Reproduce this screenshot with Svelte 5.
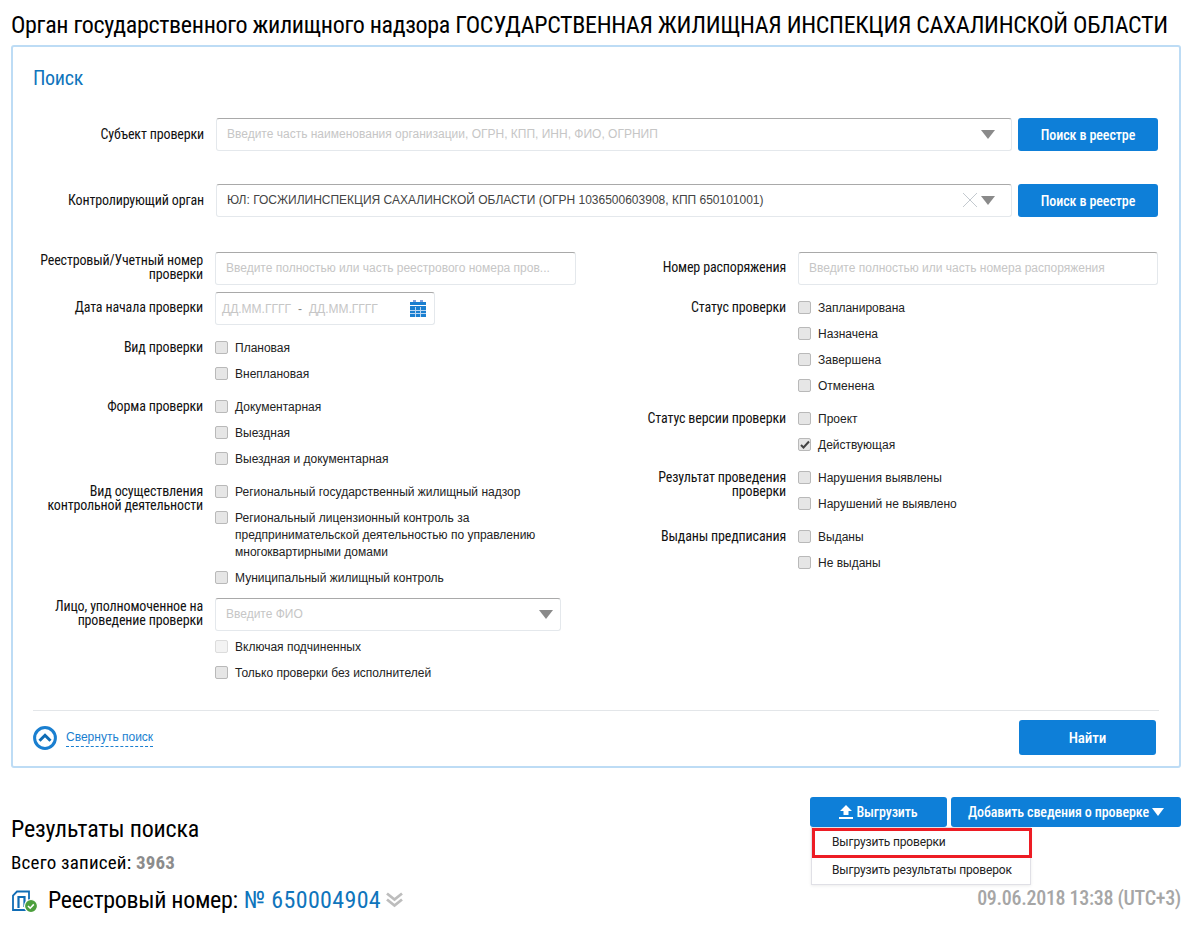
<script>
  const leftGroups = [
    { label: 'Вид проверки', items: [{ text: 'Плановая' }, { text: 'Внеплановая' }] },
    { label: 'Форма проверки', items: [{ text: 'Документарная' }, { text: 'Выездная' }, { text: 'Выездная и документарная' }] },
    {
      label: 'Вид осуществления контрольной деятельности',
      items: [
        { text: 'Региональный государственный жилищный надзор' },
        { text: 'Региональный лицензионный контроль за предпринимательской деятельностью по управлению многоквартирными домами' },
        { text: 'Муниципальный жилищный контроль' },
      ],
    },
  ];

  const rightGroups = [
    { label: 'Статус проверки', items: [{ text: 'Запланирована' }, { text: 'Назначена' }, { text: 'Завершена' }, { text: 'Отменена' }] },
    { label: 'Статус версии проверки', items: [{ text: 'Проект' }, { text: 'Действующая', checked: true }] },
    { label: 'Результат проведения проверки', items: [{ text: 'Нарушения выявлены' }, { text: 'Нарушений не выявлено' }] },
    { label: 'Выданы предписания', items: [{ text: 'Выданы' }, { text: 'Не выданы' }] },
  ];
</script>

{#snippet arrow()}
  <svg class="arrow" width="14" height="9" viewBox="0 0 14 9"><path d="M0 0h14L7 9z" fill="#8a8a8a" /></svg>
{/snippet}

{#snippet check(item)}
  <div class="check">
    <span class="box" class:disabled={item.disabled}>
      {#if item.checked}
        <svg width="10" height="9" viewBox="0 0 10 9"><path d="M1 5l2.500 2.500L9 1.500" fill="none" stroke="#444" stroke-width="2" /></svg>
      {/if}
    </span>
    <span class="check-text">{item.text}</span>
  </div>
{/snippet}

{#snippet group(g)}
  <div class="row group">
    <div class="label">{g.label}</div>
    <div class="checks">
      {#each g.items as item}
        {@render check(item)}
      {/each}
    </div>
  </div>
{/snippet}

<div class="page">
  <h1>Орган государственного жилищного надзора ГОСУДАРСТВЕННАЯ ЖИЛИЩНАЯ ИНСПЕКЦИЯ САХАЛИНСКОЙ ОБЛАСТИ</h1>

  <section class="panel">
    <h2>Поиск</h2>

    <div class="wide-row first">
      <div class="label">Субъект проверки</div>
      <div class="field select">
        <span class="placeholder">Введите часть наименования организации, ОГРН, КПП, ИНН, ФИО, ОГРНИП</span>
        {@render arrow()}
      </div>
      <button class="btn registry">Поиск в реестре</button>
    </div>

    <div class="wide-row second">
      <div class="label">Контролирующий орган</div>
      <div class="field select">
        <span class="value">ЮЛ: ГОСЖИЛИНСПЕКЦИЯ САХАЛИНСКОЙ ОБЛАСТИ (ОГРН 1036500603908, КПП 650101001)</span>
        <svg class="clear" width="14" height="14" viewBox="0 0 14 14"><path d="M0 0l14 14M14 0L0 14" stroke="#c3c9cf" stroke-width="1" fill="none" /></svg>
        {@render arrow()}
      </div>
      <button class="btn registry">Поиск в реестре</button>
    </div>

    <div class="columns">
      <div class="col left">
        <div class="row input-row">
          <div class="label">Реестровый/Учетный номер проверки</div>
          <div class="field reg"><span class="placeholder">Введите полностью или часть реестрового номера пров...</span></div>
        </div>
        <div class="row input-row date-row">
          <div class="label">Дата начала проверки</div>
          <div class="field date">
            <span class="placeholder">ДД.ММ.ГГГГ</span>
            <span class="dash">-</span>
            <span class="placeholder">ДД.ММ.ГГГГ</span>
            <svg class="calendar" width="16" height="17" viewBox="0 0 16 17">
              <rect x="3" y="0" width="3" height="3" fill="#7f9fdc" />
              <rect x="10" y="0" width="3" height="3" fill="#7f9fdc" />
              <rect x="0" y="2" width="16" height="3" fill="#1a7fd0" />
              <rect x="0" y="6" width="16" height="11" fill="#1a7fd0" />
              <path d="M0 10.500h16M0 13.500h16M5.500 7v10M10.500 7v10" stroke="#b9d6f2" stroke-width="1" />
            </svg>
          </div>
        </div>
        {#each leftGroups as g}
          {@render group(g)}
        {/each}
        <div class="row person">
          <div class="label">Лицо, уполномоченное на проведение проверки</div>
          <div class="person-body">
            <div class="field select fio">
              <span class="placeholder">Введите ФИО</span>
              {@render arrow()}
            </div>
            <div class="checks">
              {@render check({ text: 'Включая подчиненных', disabled: true })}
              {@render check({ text: 'Только проверки без исполнителей' })}
            </div>
          </div>
        </div>
      </div>

      <div class="col right">
        <div class="row input-row date-row">
          <div class="label">Номер распоряжения</div>
          <div class="field order"><span class="placeholder">Введите полностью или часть номера распоряжения</span></div>
        </div>
        {#each rightGroups as g}
          {@render group(g)}
        {/each}
      </div>
    </div>

    <div class="panel-foot">
      <div class="collapse">
        <svg width="24" height="24" viewBox="0 0 24 24">
          <circle cx="12" cy="12" r="10.400" fill="none" stroke="#1a7fd0" stroke-width="3" />
          <path d="M6.500 14.800L12 9.300l5.500 5.500" fill="none" stroke="#0f6cb5" stroke-width="3" />
        </svg>
        <span class="collapse-link">Свернуть поиск</span>
      </div>
      <button class="btn find">Найти</button>
    </div>
  </section>

  <section class="results">
    <div class="results-head">
      <div class="results-title">
        <h3>Результаты поиска</h3>
        <div class="total">Всего записей: <b>3963</b></div>
      </div>
      <div class="actions">
        <div class="export">
          <button class="btn action export-btn">
            <svg width="14" height="14" viewBox="0 0 14 14"><path d="M7 0l6 6H9.500v4h-5V6H1zM0 12h14v2H0z" fill="#fff" /></svg>
            Выгрузить
          </button>
          <div class="menu">
            <div class="menu-item active">Выгрузить проверки</div>
            <div class="menu-item">Выгрузить результаты проверок</div>
          </div>
        </div>
        <button class="btn action add-btn">
          Добавить сведения о проверке
          <svg width="12" height="8" viewBox="0 0 12 8"><path d="M0 0h12L6 8z" fill="#fff" /></svg>
        </button>
      </div>
    </div>
    <div class="record">
      <div class="record-left">
        <svg class="doc" width="27" height="24" viewBox="0 0 27 24">
          <path d="M15 22H2V7.500L6 3.500h12v11" fill="none" stroke="#0f6cb5" stroke-width="1.800" />
          <path d="M7.500 20V9h6v10" fill="none" stroke="#0f6cb5" stroke-width="2.200" />
          <circle cx="20" cy="18" r="6.500" fill="#4c9f3d" stroke="#fff" stroke-width="1.200" />
          <path d="M17 18l2.200 2.200 3.600-3.800" fill="none" stroke="#fff" stroke-width="1.600" />
        </svg>
        <span class="record-label">Реестровый номер:</span>
        <span class="record-num">№ 650004904</span>
        <svg class="chev" width="17" height="16" viewBox="0 0 17 16">
          <path d="M1 1.500l7.500 6 7.500-6M1 7.500l7.500 6 7.500-6" fill="none" stroke="#bdbdbd" stroke-width="2.800" />
        </svg>
      </div>
      <div class="record-date">09.06.2018 13:38 (UTC+3)</div>
    </div>
  </section>
</div>

<style>
  :global(body) {
    background: #fff;
    color: #000;
    font-family: "Roboto Condensed", Roboto, "Liberation Sans", sans-serif;
  }

  .page {
    padding: 0 11px;
    height: 932px;
    overflow: hidden;
    box-sizing: border-box;
  }

  h1 {
    margin: 0;
    padding-top: 12px;
    height: 45px;
    box-sizing: border-box;
    font-size: 24px;
    font-weight: 400;
    line-height: 26px;
    white-space: nowrap;
    letter-spacing: -0.33px;
  }

  .panel {
    border: 2px solid #bddcf5;
    border-radius: 3px;
    height: 723px;
    box-sizing: border-box;
    padding: 0 20px;
  }

  h2 {
    margin: 0;
    padding-top: 20px;
    height: 71px;
    box-sizing: border-box;
    font-size: 20px;
    font-weight: 400;
    line-height: 22px;
    color: #0f75bc;
    letter-spacing: -0.3px;
  }

  .label {
    font-size: 14px;
    line-height: 14px;
    text-align: right;
    letter-spacing: -0.15px;
    color: #111;
  }

  .wide-row {
    display: flex;
    align-items: center;
    height: 33px;
  }
  .wide-row .label {
    width: 171px;
    flex-shrink: 0;
    margin-right: 12px;
    padding-bottom: 2px;
    white-space: nowrap;
  }
  .wide-row .field {
    width: 796px;
    flex-shrink: 0;
  }
  .second {
    margin-top: 33px;
  }

  .field {
    height: 33px;
    box-sizing: border-box;
    border: 1px solid #e4e8ec;
    border-top-color: #a9a9a9;
    border-radius: 3px;
    padding: 0 10px 1px;
    display: flex;
    align-items: center;
    font-family: "Liberation Sans", Arial, sans-serif;
    font-size: 12px;
    white-space: nowrap;
    overflow: hidden;
  }

  .placeholder {
    color: #c6c6c6;
  }
  .value {
    color: #444;
  }

  .select .arrow {
    margin-left: auto;
    margin-right: 6px;
    flex-shrink: 0;
  }
  .clear {
    margin-left: auto;
    flex-shrink: 0;
  }
  .select .clear + .arrow {
    margin-left: 4px;
  }

  .btn {
    border: 0;
    border-radius: 3px;
    background: #0e7fd8;
    color: #fff;
    font-family: "Roboto Condensed", Roboto, sans-serif;
    font-weight: 500;
    font-size: 14px;
    letter-spacing: -0.1px;
    padding: 0;
  }
  .registry {
    width: 140px;
    height: 33px;
    margin-left: 6px;
    flex-shrink: 0;
  }

  .columns {
    display: flex;
    margin-top: 35px;
    height: 458px;
  }
  .col {
    display: flex;
    flex-direction: column;
  }
  .col.left {
    width: 582px;
  }
  .col.right {
    width: 543px;
  }

  .row {
    display: flex;
    align-items: flex-start;
  }
  .left .label {
    width: 170px;
    margin-right: 12px;
    flex-shrink: 0;
  }
  .right .label {
    width: 171px;
    margin-right: 12px;
    flex-shrink: 0;
  }

  .input-row {
    align-items: center;
    margin-bottom: 7px;
  }
  .input-row .label {
    padding-bottom: 3px;
  }
  .date-row {
    margin-bottom: 9px;
  }
  .group {
    margin-bottom: 7px;
  }
  .group .label {
    padding-top: 6px;
  }

  .reg {
    width: 361px;
  }
  .date {
    width: 220px;
    padding: 0 6px;
  }
  .dash {
    margin: 0 7px;
    color: #888;
  }
  .calendar {
    margin-left: auto;
    margin-right: 2px;
  }
  .order {
    width: 361px;
  }

  .checks {
    display: flex;
    flex-direction: column;
    flex: 1;
  }
  .check {
    display: flex;
    align-items: flex-start;
    padding: 5.500px 0 3.500px;
    font-family: "Liberation Sans", Arial, sans-serif;
    font-size: 12px;
    line-height: 17px;
    color: #222;
  }
  .check-text {
    max-width: 320px;
  }
  .box {
    width: 11px;
    height: 11px;
    margin: 1px 7px 0 0;
    flex-shrink: 0;
    border: 1px solid #b9b9b9;
    border-radius: 2px;
    background: #e6e6e6;
    display: flex;
    align-items: center;
    justify-content: center;
  }
  .box.disabled {
    background: #f3f3f3;
    border-color: #dcdcdc;
  }

  .person {
    margin-top: 1px;
  }
  .person .label {
    padding-top: 1px;
  }
  .person-body {
    display: flex;
    flex-direction: column;
  }
  .fio {
    width: 346px;
    margin-bottom: 2px;
  }
  .select.fio .arrow {
    margin-right: -3px;
  }

  .panel-foot {
    border-top: 1px solid #e3e6e9;
    display: flex;
    justify-content: space-between;
    padding-top: 9px;
  }
  .collapse {
    display: flex;
    align-items: center;
    gap: 9px;
    height: 35px;
  }
  .collapse-link {
    font-family: "Liberation Sans", Arial, sans-serif;
    font-size: 12px;
    color: #1a7fd0;
    line-height: 14px;
    padding-bottom: 2px;
    border-bottom: 1px dashed #1a7fd0;
    margin-top: 2px;
  }
  .find {
    width: 137px;
    height: 35px;
    margin-right: 3px;
    font-size: 15px;
  }

  .results-head {
    display: flex;
    justify-content: space-between;
    padding-top: 29px;
  }
  .results-title {
    padding-top: 19px;
  }
  h3 {
    margin: 0;
    font-size: 24px;
    line-height: 26px;
    font-weight: 400;
    letter-spacing: -0.2px;
  }
  .total {
    margin-top: 11px;
    font-size: 19px;
    line-height: 20px;
    letter-spacing: 0.2px;
  }
  .total b {
    color: #8c8c8c;
    font-weight: 700;
  }

  .actions {
    display: flex;
    gap: 4px;
    align-items: flex-start;
  }
  .action {
    height: 30px;
    display: flex;
    align-items: center;
    justify-content: center;
    gap: 3px;
  }
  .export {
    position: relative;
  }
  .export-btn {
    width: 137px;
  }
  .add-btn {
    width: 230px;
  }

  .menu {
    position: absolute;
    top: 30px;
    left: 1px;
    width: 220px;
    height: 58px;
    box-sizing: border-box;
    background: #fff;
    border: 1px solid #e0e0e6;
    font-family: Roboto, "Liberation Sans", sans-serif;
    font-size: 12px;
    color: #222;
    box-shadow: 0 1px 3px rgba(0, 0, 0, 0.08);
  }
  .menu-item {
    height: 25px;
    line-height: 25px;
    padding-left: 20px;
    letter-spacing: -0.15px;
  }
  .menu-item.active {
    height: 30px;
    line-height: 22px;
    box-sizing: border-box;
    margin: 0 -2px 0 0;
    border: 3px solid #ed1c24;
    padding-left: 17px;
  }

  .record {
    display: flex;
    justify-content: space-between;
    align-items: center;
    margin-top: 12px;
    height: 30px;
  }
  .record-left {
    display: flex;
    align-items: center;
  }
  .doc {
    margin-right: 10px;
  }
  .record-label {
    font-size: 24px;
    letter-spacing: -0.33px;
  }
  .record-num {
    font-size: 24px;
    color: #0f75bc;
    margin-left: 6px;
    letter-spacing: 0.35px;
  }
  .chev {
    margin-left: 5px;
  }
  .record-date {
    font-size: 20px;
    font-weight: 500;
    color: #a6a6a6;
    letter-spacing: -0.3px;
    margin-top: -4px;
  }
</style>
